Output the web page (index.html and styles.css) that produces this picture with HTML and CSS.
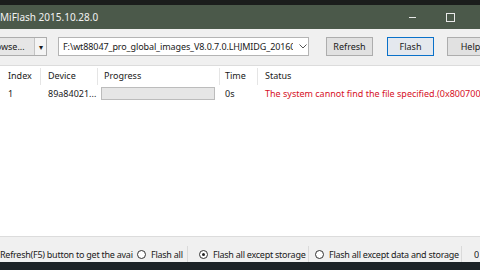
FILE: index.html
```html
<html>
<head>
    <meta charset="utf-8">
    <link rel="stylesheet" href="styles.css">
</head>
<body>
    <div class="wall-top"></div>
    <div class="titlebar">
        <span class="title">MiFlash 2015.10.28.0</span>
        <span class="winbtn min"></span>
        <span class="winbtn max"></span>
    </div>
    <div class="window">
        <div class="toolbar">
            <div class="split">
                <span class="browse">Browse...</span>
                <span class="drop">&#9662;</span>
            </div>
            <div class="combo">
                <span class="path">F:\wt88047_pro_global_images_V8.0.7.0.LHJMIDG_20160817</span>
                <svg class="chev" width="8" height="5" viewBox="0 0 8 5"><path d="M0.5 0.5 L4 4 L7.5 0.5" fill="none" stroke="#555" stroke-width="1"/></svg>
            </div>
            <div class="btn refresh">Refresh</div>
            <div class="btn flash">Flash</div>
            <div class="btn help">Help</div>
        </div>
        <div class="list">
            <div class="row head">
                <div class="c c-index">Index</div>
                <div class="c c-device">Device</div>
                <div class="c c-progress">Progress</div>
                <div class="c c-time">Time</div>
                <div class="c c-status">Status</div>
            </div>
            <div class="row">
                <div class="c c-index">1</div>
                <div class="c c-device">89a84021...</div>
                <div class="c c-progress"><div class="bar"></div></div>
                <div class="c c-time">0s</div>
                <div class="c c-status err">The system cannot find the file specified.(0x80070002)</div>
            </div>
        </div>
        <div class="statusbar">
            <div class="sb hint">Refresh(F5) button to get the avai</div>
            <div class="sb opt opt-all"><span class="radio"></span>Flash all</div>
            <div class="sb opt opt-storage"><span class="radio on"></span>Flash all except storage</div>
            <div class="sb opt opt-data"><span class="radio"></span>Flash all except data and storage</div>
            <div class="sb num">0</div>
        </div>
    </div>
    <div class="wall-bottom"></div>
</body>
</html>
```

FILE: styles.css
```css
body{
    margin: 0;
    width: 480px;
    height: 270px;
    overflow: hidden;
    font-family: "Noto Sans", "Open Sans", sans-serif;
    font-size: 9px;
    color: #1a1a1a;
    background: #f0f0f0;
}
.wall-top{
    height: 5px;
    background: #1b1d1c;
}
.titlebar{
    height: 24px;
    background: #4b594a;
    color: #f2f2f2;
    display: flex;
    align-items: center;
    white-space: nowrap;
}
.title{
    font-size: 10px;
    flex: 1;
}
.winbtn{
    display: inline-block;
    flex-shrink: 0;
}
.min{
    width: 7px;
    height: 1px;
    background: #e8e8e8;
    margin-right: 30px;
}
.max{
    width: 7px;
    height: 7px;
    border: 1px solid #e8e8e8;
    margin-right: 25px;
}
.window{
    height: 233px;
    display: flex;
    flex-direction: column;
    background: #f0f0f0;
}
.toolbar{
    display: flex;
    align-items: center;
    height: 19px;
    margin: 8px 0 0 -24px;
    white-space: nowrap;
}
.toolbar > div{
    flex-shrink: 0;
}
.split{
    display: flex;
    height: 19px;
    border: 1px solid #adadad;
    box-sizing: border-box;
    background: #e6e6e6;
    width: 71px;
}
.browse{
    width: 57px;
    line-height: 17px;
    text-align: center;
    border-right: 1px solid #c4c4c4;
}
.drop{
    flex: 1;
    line-height: 17px;
    text-align: center;
    font-size: 8px;
    background: #f4f4f4;
}
.combo{
    margin-left: 11px;
    width: 251px;
    height: 19px;
    box-sizing: border-box;
    border: 1px solid #b4b4b4;
    background: #fff;
    display: flex;
    align-items: center;
    padding-left: 4px;
    overflow: hidden;
}
.path{
    width: 230px;
    overflow: hidden;
    letter-spacing: -0.1px;
}
.chev{
    margin-left: 6px;
}
.btn{
    height: 19px;
    box-sizing: border-box;
    border: 1px solid #adadad;
    background: #e1e1e1;
    text-align: center;
    line-height: 17px;
}
.refresh{
    margin-left: 17px;
    width: 47px;
}
.flash{
    margin-left: 14px;
    width: 47px;
    border-color: #0a71c9;
    background: #e4e8ee;
}
.help{
    margin-left: 13px;
    width: 47px;
}
.list{
    margin-top: 9px;
    height: 168px;
    background: #fff;
    border-top: 1px solid #dcdcdc;
    border-bottom: 1px solid #dcdcdc;
    padding-top: 2px;
}
.row{
    display: flex;
    height: 17px;
    align-items: center;
    white-space: nowrap;
}
.head .c{
    height: 17px;
    line-height: 16px;
    border-right: 1px solid #e5e5e5;
}
.head .c-status{
    border-right: none;
}
.c{
    box-sizing: border-box;
    padding-left: 7px;
    overflow: hidden;
}
.c-index{ width: 41px; padding-left: 8px; }
.c-device{ width: 57px; }
.c-progress{ width: 122px; padding-left: 6px; }
.c-time{ width: 38px; padding-left: 5px; }
.c-status{ flex: 1; }
.row .c-progress .bar{
    margin-left: -3px;
    width: 114px;
    height: 13px;
    box-sizing: border-box;
    border: 1px solid #bcbcbc;
    background: #e6e6e6;
}
.err{
    color: #d6101f;
}
.statusbar{
    margin-top: 9px;
    height: 16px;
    display: flex;
    align-items: center;
    white-space: nowrap;
    letter-spacing: -0.25px;
}
.sb{
    display: flex;
    align-items: center;
    height: 16px;
    flex-shrink: 0;
    border-right: 1px solid #dadada;
    box-sizing: border-box;
    overflow: hidden;
}
.hint{
    width: 135px;
    border-right: none;
}
.opt-all{ width: 53px; padding-left: 2px; }
.opt-storage{ width: 121px; padding-left: 11px; }
.opt-data{ width: 153px; padding-left: 6px; }
.radio{
    width: 9px;
    height: 9px;
    flex-shrink: 0;
    box-sizing: border-box;
    border: 1px solid #333;
    border-radius: 50%;
    background: #fff;
    margin-right: 5px;
    position: relative;
}
.radio.on::after{
    content: "";
    position: absolute;
    left: 2px;
    top: 2px;
    width: 3px;
    height: 3px;
    border-radius: 50%;
    background: #222;
}
.num{
    border-right: none;
    padding-left: 12px;
}
.wall-bottom{
    height: 8px;
    background: #1c2226;
}
```
